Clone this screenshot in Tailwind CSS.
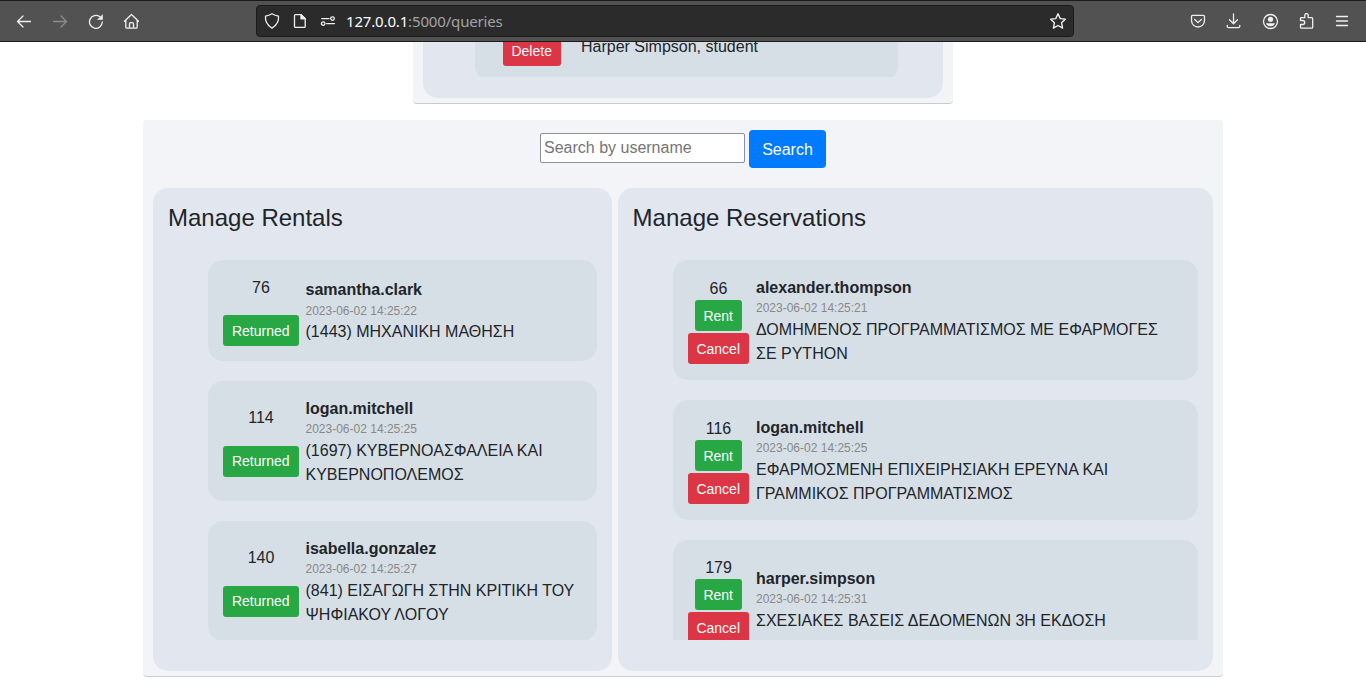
<!DOCTYPE html>
<html lang="en">
<head>
<meta charset="utf-8">
<title>Queries</title>
<script src="https://cdn.jsdelivr.net/npm/@tailwindcss/browser@4"></script>
</head>
<body class="h-[691px] overflow-hidden bg-white font-['Liberation_Sans',sans-serif] text-base leading-6 text-[#212529]">
<header class="flex h-[42px] items-center border-y border-[#1c1b1c] bg-[#525252] text-[#f0f0f0]">
  <nav class="flex w-[256px] shrink-0 items-center gap-5 pl-4">
    <svg class="size-4" viewBox="0 0 16 16" fill="none" stroke="currentColor" stroke-width="1.3" stroke-linecap="round" stroke-linejoin="round"><path d="M14.500 8.500H1.500M7 3L1.500 8.500L7 14"/></svg>
    <svg class="size-4 text-[#8c8c8c]" viewBox="0 0 16 16" fill="none" stroke="currentColor" stroke-width="1.3" stroke-linecap="round" stroke-linejoin="round"><path d="M1.500 8.500H14.500M9 3L14.500 8.500L9 14"/></svg>
    <svg class="size-4" viewBox="0 0 16 16" fill="none" stroke="currentColor" stroke-width="1.3" stroke-linecap="round"><path d="M14.300 9A6.400 6.400 0 1 1 11.800 3.800"/><path d="M14.500 2V6.500H10Z" fill="currentColor" stroke-width=".6" stroke-linejoin="round"/></svg>
    <svg class="-ml-[1px] size-4" viewBox="0 0 16 16" fill="none" stroke="currentColor" stroke-width="1.3" stroke-linecap="round" stroke-linejoin="round"><path d="M1.500 8.300L8.500 1.500L15.500 8.300M2.800 7.300V14Q2.800 15.200 4 15.200H13Q14.200 15.200 14.200 14V7.300M6.500 15V11Q6.500 9.700 7.700 9.700H9.300Q10.500 9.700 10.500 11V15"/></svg>
  </nav>
  <div class="flex h-8 w-[818px] shrink-0 items-center rounded-[4px] border border-[#1c1b1c] bg-[#2b2b2b] pr-[6px] pl-[7px]">
    <svg class="size-4" viewBox="0 0 16 16" fill="none" stroke="currentColor" stroke-width="1.300" stroke-linejoin="round"><path d="M8 .8Q11 2.500 14.500 3.200Q15.200 10.500 8 15.200Q.8 10.500 1.500 3.200Q5 2.500 8 .8Z"/></svg>
    <svg class="ml-3 size-4" viewBox="0 0 16 16" fill="none" stroke="currentColor" stroke-width="1.300" stroke-linejoin="round"><path d="M3.500 1.600H9L13.200 5.800V13.400Q13.200 14.400 12.200 14.400H3.500Q2.500 14.400 2.500 13.400V2.600Q2.500 1.600 3.500 1.600Z"/><path d="M9 1.600V5.800H13.200Z" fill="currentColor"/></svg>
    <svg class="ml-3 size-4" viewBox="0 0 16 16" fill="none" stroke="currentColor" stroke-width="1.300" stroke-linecap="round"><path d="M1.700 5.600H9M6.700 10.600H14.500"/><circle cx="12.500" cy="5.600" r="1.800"/><circle cx="3.200" cy="10.600" r="1.800"/></svg>
    <div class="ml-[10px] flex-1 font-['Noto_Sans',sans-serif] text-[15px] leading-5 tracking-[-0.16px] text-[#a3a3a3]"><span class="text-[#fbfbfe]">127.0.0.1</span>:5000/queries</div>
    <svg class="size-[18px]" viewBox="0 0 16 16" fill="none" stroke="currentColor" stroke-width="1.200" stroke-linejoin="round"><path d="M8 1.500L10 5.900L14.500 6.400L11.200 9.600L12.100 14.300L8 12L3.900 14.300L4.800 9.600L1.500 6.400L6 5.900Z"/></svg>
  </div>
  <div class="flex flex-1 items-center justify-end gap-5 pr-4">
    <svg class="size-4" viewBox="0 0 16 16" fill="none" stroke="currentColor" stroke-width="1.300" stroke-linecap="round" stroke-linejoin="round"><path d="M2.700 2.300H13.300Q14.500 2.300 14.500 3.500V7.500A6.500 6.500 0 0 1 1.500 7.500V3.500Q1.500 2.300 2.700 2.300ZM4.700 6.500L8 9.600L11.300 6.500"/></svg>
    <svg class="-ml-[1px] mr-[1px] size-4" viewBox="0 0 16 16" fill="none" stroke="currentColor" stroke-width="1.300" stroke-linecap="round" stroke-linejoin="round"><path d="M8.500 .8V10.500M4.500 6.700L8.500 10.700L12.500 6.700M2.200 12.300V13.200Q2.200 14.700 3.700 14.700H13.300Q14.800 14.700 14.800 13.200V12.300"/></svg>
    <svg class="size-4 overflow-visible" viewBox="0 0 16 16" fill="none" stroke="currentColor" stroke-width="1.300"><circle cx="8.500" cy="8.500" r="7"/><circle cx="8.500" cy="6.300" r="2.600" fill="currentColor" stroke="none"/><path d="M4 10.200H13Q12 13.200 8.500 13.200Q5 13.200 4 10.200Z" fill="currentColor" stroke="none"/></svg>
    <svg class="size-4" viewBox="0 0 16 16" fill="none" stroke="currentColor" stroke-width="1.300" stroke-linejoin="round"><path d="M2.500 7.500V5.500Q2.500 4.700 3.300 4.700H6.800V2.300A1.700 1.700 0 0 1 10.200 2.300V4.700H13.700Q14.700 4.700 14.700 5.700V14.200Q14.700 15.200 13.700 15.200H3.500Q2.500 15.200 2.500 14.200V11.500H4.700A2 2 0 0 0 4.700 7.500Z"/></svg>
    <svg class="size-4" viewBox="0 0 16 16" fill="none" stroke="currentColor" stroke-width="1.300" stroke-linecap="round"><path d="M2.500 3.500H13.500M2.500 8H13.500M2.500 12.500H13.500"/></svg>
  </div>
</header>
<main class="flex flex-col items-center">
  <section class="h-[62px] w-[540px] rounded-b-[4px] border-b border-[#c9ccce] bg-[#f2f4f8] px-[10px]">
    <div class="h-14 rounded-b-[15px] bg-[#e2e7ef] pr-[45px] pl-[52px]">
      <div class="h-[35px] overflow-hidden">
        <div class="flex h-[39px] items-start rounded-b-[15px] bg-[#d7dfe6] pl-7">
          <button class="-mt-[7px] h-[31px] w-[58px] rounded-[3px] bg-[#dc3545] pt-[2px] pr-[0.600px] text-sm leading-[21px] text-white">Delete</button>
          <span class="-mt-[7px] ml-5">Harper Simpson, student</span>
        </div>
      </div>
    </div>
  </section>
  <section class="mt-4 h-[557px] w-[1080px] rounded-[4px] border-b border-[#c9ccce] bg-[#f2f4f8] px-[10px] pt-[10px]">
    <form class="flex h-[38px] justify-center gap-1">
      <input class="mt-[3px] h-[30px] w-[205px] rounded-[2px] border border-[#8f8f9d] bg-white px-[3px] placeholder:text-[#757575]" placeholder="Search by username">
      <button type="button" class="h-[38px] w-[77px] rounded-[4px] bg-[#007bff] pt-[1px] text-white">Search</button>
    </form>
    <div class="mt-5 flex h-[483px] gap-[6px]">
      <div class="w-[459px] rounded-[15px] bg-[#e2e7ef] p-[15px]">
        <h2 class="text-2xl leading-[29px]">Manage Rentals</h2>
        <div class="mt-7 ml-10 flex h-[380px] flex-col gap-5 overflow-hidden">
          <article class="flex shrink-0 items-center gap-[6.500px] rounded-[15px] bg-[#d7dfe6] p-[15px]">
            <div class="flex w-[76px] shrink-0 flex-col items-center gap-4"><span class="mt-[0.500px] -mb-[0.500px]">76</span><button class="h-[31px] w-full rounded-[3px] bg-[#28a745] pr-[0.600px] text-sm text-white">Returned</button></div>
            <div><b class="mt-[0.500px] -mb-[0.500px] block">samantha.clark</b><small class="block text-xs leading-[18px] text-[#888]">2023-06-02 14:25:22</small><p class="mt-[0.500px] -mb-[0.500px]">(1443) ΜΗΧΑΝΙΚΗ ΜΑΘΗΣΗ</p></div>
          </article>
          <article class="flex shrink-0 items-center gap-[6.500px] rounded-[15px] bg-[#d7dfe6] p-[15px]">
            <div class="flex w-[76px] shrink-0 flex-col items-center gap-4"><span class="mt-[0.500px] -mb-[0.500px]">114</span><button class="h-[31px] w-full rounded-[3px] bg-[#28a745] pr-[0.600px] text-sm text-white">Returned</button></div>
            <div><b class="mt-[0.500px] -mb-[0.500px] block">logan.mitchell</b><small class="block text-xs leading-[18px] text-[#888]">2023-06-02 14:25:25</small><p class="mt-[0.500px] -mb-[0.500px]">(1697) ΚΥΒΕΡΝΟΑΣΦΑΛΕΙΑ ΚΑΙ ΚΥΒΕΡΝΟΠΟΛΕΜΟΣ</p></div>
          </article>
          <article class="flex shrink-0 items-center gap-[6.500px] rounded-[15px] bg-[#d7dfe6] p-[15px]">
            <div class="flex w-[76px] shrink-0 flex-col items-center gap-4"><span class="mt-[0.500px] -mb-[0.500px]">140</span><button class="h-[31px] w-full rounded-[3px] bg-[#28a745] pr-[0.600px] text-sm text-white">Returned</button></div>
            <div><b class="mt-[0.500px] -mb-[0.500px] block">isabella.gonzalez</b><small class="block text-xs leading-[18px] text-[#888]">2023-06-02 14:25:27</small><p class="mt-[0.500px] -mb-[0.500px]">(841) ΕΙΣΑΓΩΓΗ ΣΤΗΝ ΚΡΙΤΙΚΗ ΤΟΥ ΨΗΦΙΑΚΟΥ ΛΟΓΟΥ</p></div>
          </article>
        </div>
      </div>
      <div class="w-[595px] rounded-[15px] bg-[#e2e7ef] p-[15px]">
        <h2 class="-ml-[0.400px] text-2xl leading-[29px]">Manage Reservations</h2>
        <div class="mt-7 ml-10 flex h-[380px] flex-col gap-5 overflow-hidden">
          <article class="flex shrink-0 items-center gap-[7px] rounded-[15px] bg-[#d7dfe6] py-[15px] pr-5 pl-[15px]">
            <div class="flex w-[61px] shrink-0 flex-col items-center"><span class="mt-[0.500px] -mb-[0.500px]">66</span><button class="h-[31px] w-[47px] rounded-[3px] bg-[#28a745] pr-[0.600px] text-sm text-white">Rent</button><button class="mt-[2px] h-[31px] w-full rounded-[3px] bg-[#dc3545] pr-[0.600px] text-sm text-white">Cancel</button></div>
            <div><b class="mt-[0.500px] -mb-[0.500px] block">alexander.thompson</b><small class="block text-xs leading-[18px] text-[#888]">2023-06-02 14:25:21</small><p class="mt-[0.500px] -mb-[0.500px]">ΔΟΜΗΜΕΝΟΣ ΠΡΟΓΡΑΜΜΑΤΙΣΜΟΣ ΜΕ ΕΦΑΡΜΟΓΕΣ ΣΕ PYTHON</p></div>
          </article>
          <article class="flex shrink-0 items-center gap-[7px] rounded-[15px] bg-[#d7dfe6] py-[15px] pr-5 pl-[15px]">
            <div class="flex w-[61px] shrink-0 flex-col items-center"><span class="mt-[0.500px] -mb-[0.500px]">116</span><button class="h-[31px] w-[47px] rounded-[3px] bg-[#28a745] pr-[0.600px] text-sm text-white">Rent</button><button class="mt-[2px] h-[31px] w-full rounded-[3px] bg-[#dc3545] pr-[0.600px] text-sm text-white">Cancel</button></div>
            <div><b class="mt-[0.500px] -mb-[0.500px] block">logan.mitchell</b><small class="block text-xs leading-[18px] text-[#888]">2023-06-02 14:25:25</small><p class="mt-[0.500px] -mb-[0.500px]">ΕΦΑΡΜΟΣΜΕΝΗ ΕΠΙΧΕΙΡΗΣΙΑΚΗ ΕΡΕΥΝΑ ΚΑΙ ΓΡΑΜΜΙΚΟΣ ΠΡΟΓΡΑΜΜΑΤΙΣΜΟΣ</p></div>
          </article>
          <article class="flex shrink-0 items-center gap-[7px] rounded-[15px] bg-[#d7dfe6] py-[15px] pr-5 pl-[15px]">
            <div class="flex w-[61px] shrink-0 flex-col items-center"><span class="mt-[0.500px] -mb-[0.500px]">179</span><button class="h-[31px] w-[47px] rounded-[3px] bg-[#28a745] pr-[0.600px] text-sm text-white">Rent</button><button class="mt-[2px] h-[31px] w-full rounded-[3px] bg-[#dc3545] pr-[0.600px] text-sm text-white">Cancel</button></div>
            <div><b class="mt-[0.500px] -mb-[0.500px] block">harper.simpson</b><small class="block text-xs leading-[18px] text-[#888]">2023-06-02 14:25:31</small><p class="mt-[0.500px] -mb-[0.500px]">ΣΧΕΣΙΑΚΕΣ ΒΑΣΕΙΣ ΔΕΔΟΜΕΝΩΝ 3Η ΕΚΔΟΣΗ</p></div>
          </article>
        </div>
      </div>
    </div>
  </section>
</main>
</body>
</html>
